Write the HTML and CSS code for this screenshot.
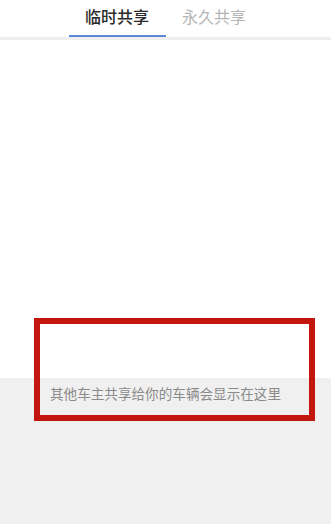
FILE: index.html
```html
<!DOCTYPE html>
<html lang="zh-CN">
<head>
<meta charset="utf-8">
<link rel="stylesheet" href="styles.css">
</head>
<body>
<div class="page">
  <div class="header">
    <div class="tabs">
      <div class="tab active">临时共享</div>
      <div class="tab">永久共享</div>
    </div>
  </div>
  <div class="divider"></div>
  <div class="content"></div>
  <div class="empty">
    <p class="empty-text">其他车主共享给你的车辆会显示在这里</p>
  </div>
  <div class="highlight"></div>
</div>
</body>
</html>
```
FILE: styles.css
```css
html, body {
  margin: 0;
  padding: 0;
  background: #ffffff;
}
body {
  font-family: "Noto Sans CJK SC", "Noto Sans", sans-serif;
}
.page {
  position: relative;
  width: 331px;
  height: 524px;
  display: flex;
  flex-direction: column;
  overflow: hidden;
}
.header {
  height: 37px;
  display: flex;
  justify-content: center;
  background: #ffffff;
}
.tabs {
  display: flex;
}
.tab {
  width: 97px;
  height: 37px;
  box-sizing: border-box;
  display: flex;
  align-items: center;
  justify-content: center;
  font-size: 16px;
  color: #b4b4b4;
  padding-bottom: 3px;
  border-bottom: 2px solid transparent;
}
.tab.active {
  color: #2a2a2a;
  font-weight: 500;
  border-bottom-color: #5b87d6;
}
.divider {
  height: 3px;
  background: #eeeeee;
}
.content {
  height: 338px;
  background: #ffffff;
}
.empty {
  flex: 1;
  background: #f0f0f0;
  padding-top: 5px;
}
.empty-text {
  margin: 0;
  text-align: center;
  font-size: 13.6px;
  line-height: 20px;
  color: #8a8a8a;
}
.highlight {
  position: absolute;
  left: 34px;
  top: 318px;
  width: 281px;
  height: 103px;
  box-sizing: border-box;
  border: 6px solid #c2160e;
}
```
